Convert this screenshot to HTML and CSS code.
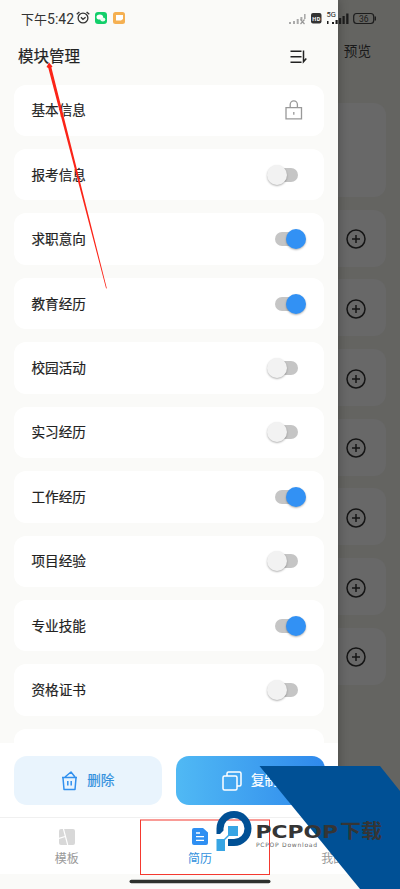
FILE: index.html
```html
<!DOCTYPE html>
<html lang="zh-CN">
<head>
<meta charset="utf-8">
<meta name="viewport" content="width=device-width">
<title>模块管理</title>
<link rel="stylesheet" href="styles.css">
</head>
<body>
<svg class="defs" width="0" height="0"><defs>
  <symbol id="plus" viewBox="0 0 20 20"><circle cx="10" cy="10" r="9" fill="none" stroke="#151515" stroke-width="1.5"/><path d="M6 10h8M10 6v8" stroke="#151515" stroke-width="1.5"/></symbol>
</defs></svg>
<div class="screen">
  <div class="resume">
    <div class="preview">预览</div>
    <div class="block tall"></div>
    <div class="block"><svg><use href="#plus"/></svg></div>
    <div class="block"><svg><use href="#plus"/></svg></div>
    <div class="block"><svg><use href="#plus"/></svg></div>
    <div class="block"><svg><use href="#plus"/></svg></div>
    <div class="block"><svg><use href="#plus"/></svg></div>
    <div class="block"><svg><use href="#plus"/></svg></div>
    <div class="block"><svg><use href="#plus"/></svg></div>
  </div>

  <div class="drawer">
    <header class="head">
      <h1>模块管理</h1>
      <svg width="20" height="16" viewBox="0 0 20 16" fill="none" stroke="#222" stroke-width="1.5"><path d="M1.500 2.200h11M1.500 7.700h11M1.500 13.200h11M14.500 1.500v11.300l2.800-3.200"/></svg>
    </header>
    <ul class="list">
      <li><span>基本信息</span><svg class="lock" width="18" height="20" viewBox="0 0 18 20" fill="none" stroke="#999" stroke-width="1.3"><path d="M1 7.700h15.500v11.200H1zM5.200 7.500V4.500a3.600 3.600 0 0 1 7.200 0v3M8.800 12v2.800"/></svg></li>
      <li><span>报考信息</span><i class="switch"></i></li>
      <li><span>求职意向</span><i class="switch on"></i></li>
      <li><span>教育经历</span><i class="switch on"></i></li>
      <li><span>校园活动</span><i class="switch"></i></li>
      <li><span>实习经历</span><i class="switch"></i></li>
      <li><span>工作经历</span><i class="switch on"></i></li>
      <li><span>项目经验</span><i class="switch"></i></li>
      <li><span>专业技能</span><i class="switch on"></i></li>
      <li><span>资格证书</span><i class="switch"></i></li>
      <li></li>
    </ul>
    <div class="actions">
      <div class="btn delete"><svg width="17" height="20" viewBox="0 0 17 20" fill="none" stroke="#3190ee" stroke-width="1.5" stroke-linejoin="round"><path d="M1 6.500h15M2 7l1 11.500h11L15 7M4 6l6-5 4 5M6.800 10v4.500M10.200 10v4.500"/></svg><span>删除</span></div>
      <div class="btn copy"><svg width="20" height="20" viewBox="0 0 20 20" fill="none" stroke="#fff" stroke-width="1.5"><rect x="1" y="5" width="14" height="14" rx="1.500"/><path d="M5 5V2.500Q5 1 6.500 1h11Q19 1 19 2.500v11q0 1.500-1.500 1.500H15"/></svg><span>复制</span></div>
    </div>
  </div>

  <nav class="tabs">
    <div><svg width="16" height="16" viewBox="0 0 16 16"><rect width="16" height="16" rx="2" fill="#d8d8d8"/><path d="M4.500 0 8.700 16M0 9.500l6-2" stroke="#fff" stroke-width="1.200"/></svg>模板</div>
    <div class="active"><svg width="16" height="17" viewBox="0 0 16 17"><path d="M2 0h9l5 4.500V15q0 2-2 2H2q-2 0-2-2V2Q0 0 2 0z" fill="#2f8ff2"/><path d="M4 5h4M4 8.700h8M4 12.400h8" stroke="#fff" stroke-width="1.300"/></svg>简历</div>
    <div><svg width="16" height="16"></svg>我的</div>
  </nav>

  <div class="status">
    <span class="time">下午<b>5:42</b></span>
    <svg width="46" height="16" viewBox="0 0 46 16"><g fill="none" stroke="#333" stroke-width="1.300"><circle cx="7" cy="8" r="4.900"/><path d="M.700 4.300 3.400 1.900M13.300 4.300 10.600 1.900M4.900 7.200 7 9.300l2.600-2"/></g><rect x="19" y="2" width="12" height="12" rx="3" fill="#12cf6a"/><ellipse cx="23.800" cy="7" rx="3.300" ry="2.600" fill="#fff"/><ellipse cx="26.800" cy="9.400" rx="2.500" ry="2" fill="#e9fff1"/></svg>
    <svg class="note" width="12" height="12" viewBox="0 0 12 12"><rect width="12" height="12" rx="2.500" fill="#f5b052"/><path d="M3 3h7v4L8 8.500H3z" fill="#fff"/></svg>
    <svg class="signals" width="92" height="18" viewBox="0 0 92 18">
      <g fill="#aaa"><path d="M1 13h2v2H1zM5 12h2v3H5zM8.700 10h2v5h-2zM12.400 8h2v3h-2zM16 5h1.600v5H16z"/></g><path d="m12.500 10.500 4 4.500m0-4.500-4 4.500" stroke="#999" stroke-width="1.200"/>
      <rect x="23" y="4" width="10.500" height="10.500" rx="2" fill="#333"/><text x="24.300" y="11.500" font-size="5.500" font-weight="700" fill="#fff" textLength="8">HD</text>
      <text x="38.500" y="8" font-size="7.500" fill="#222" textLength="9.500" lengthAdjust="spacingAndGlyphs">5G</text>
      <path d="M39 12h1.500v3H39zM44 13h2v2h-2zM47.500 11h2.200v4h-2.200zM51 9h2.200v6H51zM54.500 7h2.200v8h-2.200zM58.200 4.500h2.300V15h-2.300z" fill="#1c1c1c"/>
      <rect x="65.700" y="4.500" width="20" height="10" rx="3" fill="none" stroke="#1c1c1c" stroke-width="1.200"/><path d="M87.300 7.500v4" stroke="#1c1c1c" stroke-width="1.400"/><text x="71" y="12.600" font-size="8.500" fill="#1c1c1c" textLength="9.500">36</text>
    </svg>
  </div>

  <svg class="overlay" width="400" height="889" viewBox="0 0 400 889">
    <path d="M46.500 67 49 62.500 52.500 66.500 51.400 67.500 106.800 288.300 106.100 288.500 48.300 68z" fill="#fb2418"/>
    <path d="M259.500 766H380l20 25v98h-40z" fill="#005095"/>
    <rect x="140.500" y="820" width="129" height="54.500" fill="none" stroke="#f4392f"/>
    <path d="M131.300 881.500h137.400" stroke="#2d312d" stroke-width="3.600" stroke-linecap="round"/>
    <path d="M216.500 834v-5.500a17.500 17.500 0 1 1 17.500 17.500H228v-7h6a10.500 10.500 0 1 0-10.500-10.500v2l-3.500 3.500z" fill="#005095"/>
    <path d="M228 826h10v10h-9l-4 4v11h-8.500v-12h7.500l4-4z" fill="#37a5e4"/>
    <g fill="#353535" class="brand"><text x="255.500" y="837.500" font-size="18" textLength="82.500" lengthAdjust="spacingAndGlyphs">PCPOP</text><text x="340" y="838" font-size="19" textLength="42" lengthAdjust="spacingAndGlyphs">下载</text></g>
    <text class="sub" x="256" y="846.500" font-size="6" fill="#666" textLength="61">PCPOP Download</text>
  </svg>
</div>
</body>
</html>
```

FILE: styles.css
```css
* { box-sizing: border-box; }
body {
  margin: 0;
  font-family: Roboto, "Noto Sans CJK SC", sans-serif;
  color: #222;
}
.defs { display: none; }
.screen {
  display: grid;
  grid-template: 889px / 400px;
  overflow: hidden;
  background: #646461;
}
.screen > * { grid-area: 1 / 1; }
svg { display: block; flex: none; }

.resume {
  display: flex;
  flex-direction: column;
  gap: 12.7px;
  padding: 0 14px;
}
.preview {
  height: 90.3px;
  padding: 41px 15px 0 0;
  font-size: 13.6px;
  line-height: 20px;
  text-align: right;
  color: #191919;
}
.block {
  flex: none;
  display: flex;
  align-items: center;
  justify-content: flex-end;
  height: 57px;
  padding-right: 20px;
  border-radius: 12px;
  background: #686868;
}
.block.tall { height: 94px; }
.block svg { width: 20px; height: 20px; margin-top: 2px; }

.drawer {
  display: flex;
  flex-direction: column;
  width: 338px;
  height: 818px;
  background: #fafaf8;
  box-shadow: 0 0 10px rgba(0, 0, 0, .3);
}
.head {
  flex: none;
  display: flex;
  justify-content: space-between;
  align-items: center;
  height: 84.5px;
  padding: 30px 29px 0 18px;
}
.head h1 {
  margin: 0;
  font-size: 15.5px;
  font-weight: 400;
  -webkit-text-stroke: .2px;
  line-height: 24px;
}
.list {
  flex: 1;
  min-height: 0;
  overflow: hidden;
  display: flex;
  flex-direction: column;
  gap: 13px;
  margin: 0;
  padding: 0 14px;
  list-style: none;
}
.list li {
  flex: none;
  display: flex;
  justify-content: space-between;
  align-items: center;
  height: 51.45px;
  padding: 0 26px 0 17.5px;
  border-radius: 12px;
  background: #fff;
  font-size: 13.6px;
  -webkit-text-stroke: .2px;
}
.list span { padding-bottom: 2px; }
.lock { margin-right: -5px; }
.switch {
  display: flex;
  align-items: center;
  width: 23px;
  height: 14px;
  border-radius: 7px;
  background: #c5c5c5;
}
.switch::before {
  content: "";
  flex: none;
  width: 20px;
  height: 20px;
  margin-left: -8px;
  border-radius: 50%;
  background: #f2f2f2;
  box-shadow: 0 1px 2px rgba(0, 0, 0, .3);
}
.switch.on::before { margin-left: 11px; background: #3291f4; }

.actions {
  flex: none;
  display: grid;
  grid-template-columns: 1fr 1fr;
  gap: 13.5px;
  height: 75px;
  padding: 13px 13.5px;
  background: #fff;
}
.btn {
  display: flex;
  justify-content: center;
  align-items: center;
  gap: 9px;
  border-radius: 13px;
  font-size: 13.6px;
  -webkit-text-stroke: .2px;
}
.btn span { padding-bottom: 3px; }
.delete { background: #e9f4fd; color: #3190dd; }
.copy { background: linear-gradient(90deg, #50b9f4, #2f89ec); color: #fff; }

.tabs {
  align-self: end;
  display: grid;
  grid-template-columns: repeat(3, 1fr);
  height: 72px;
  border-top: 1px solid #f0f0f0;
  background: linear-gradient(#fff 56px, #fafaf8 56px);
  font-size: 12px;
  line-height: 16px;
  color: #999;
}
.tabs > div {
  display: flex;
  flex-direction: column;
  align-items: center;
  gap: 6px;
  padding-top: 11px;
}
.tabs .active { padding-top: 10px; color: #3190dd; }

.status {
  display: flex;
  align-items: center;
  height: 24px;
  margin-top: 6px;
  padding: 0 20px 0 21px;
  font-size: 13px;
  color: #333;
}
.time { width: 55px; white-space: nowrap; }
.time b { font-size: 14px; font-weight: 400; }
.note { margin-left: -9px; }
.signals { margin-left: auto; }
.overlay { z-index: 2; }
.brand { font-family: "DejaVu Sans", "Noto Sans CJK SC", sans-serif; font-weight: 700; }
.sub { font-family: "DejaVu Sans", sans-serif; }
```
